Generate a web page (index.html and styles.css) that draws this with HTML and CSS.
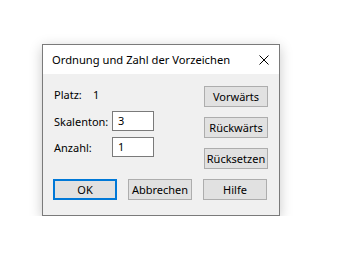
FILE: index.html
```html
<!DOCTYPE html>
<html lang="de">
<head>
<meta charset="utf-8">
<title>Ordnung und Zahl der Vorzeichen</title>
<link rel="stylesheet" href="styles.css">
</head>
<body>
<div class="dialog">
  <div class="titlebar">
    <span class="title">Ordnung und Zahl der Vorzeichen</span>
    <svg class="close" width="10" height="10" viewBox="0 0 10 10"><path d="M0.5 0.5L9.5 9.5M9.5 0.5L0.5 9.5" stroke="#000" stroke-width="1" fill="none"/></svg>
  </div>
  <div class="body">
    <div class="content">
      <div class="fields">
        <div class="row platz"><span class="label">Platz:</span><span class="value">1</span></div>
        <div class="row"><span class="label">Skalenton:</span><span class="input">3</span></div>
        <div class="row anz"><span class="label">Anzahl:</span><span class="input">1</span></div>
      </div>
      <div class="side">
        <button class="btn">Vorwärts</button>
        <button class="btn">Rückwärts</button>
        <button class="btn">Rücksetzen</button>
      </div>
    </div>
    <div class="footer">
      <button class="btn default">OK</button>
      <button class="btn">Abbrechen</button>
      <button class="btn">Hilfe</button>
    </div>
  </div>
</div>
</body>
</html>
```
FILE: styles.css
```css
html, body {
  margin: 0;
  padding: 0;
  background: #ffffff;
}
body {
  padding: 44px 0 0 42px;
  font-family: "Noto Sans", "DejaVu Sans", sans-serif;
  font-size: 11px;
  color: #000;
}
.dialog {
  width: 236px;
  height: 170px;
  border: 1px solid #7a7a7a;
  background: #f0f0f0;
  box-shadow: 0 3px 12px rgba(0,0,0,0.22);
  display: flex;
  flex-direction: column;
}
.titlebar {
  height: 29px;
  background: #ffffff;
  display: flex;
  align-items: center;
  justify-content: space-between;
  padding: 0 10px 0 9px;
}
.title {
  font-size: 11.2px;
}
.close {
  display: block;
}
.body {
  padding: 12px 11px 0 10px;
}
.content {
  display: flex;
  justify-content: space-between;
}
.fields {
  display: flex;
  flex-direction: column;
}
.row {
  display: flex;
  align-items: center;
  height: 20px;
  margin-top: 6px;
}
.row.platz {
  margin-top: -2px;
  margin-bottom: 1px;
}
.label {
  width: 59px;
  padding-left: 1px;
  box-sizing: border-box;
}
.platz .label {
  width: 40px;
}
.input {
  width: 42px;
  height: 20px;
  box-sizing: border-box;
  border: 1px solid #7a7a7a;
  background: #fff;
  padding-left: 5px;
  line-height: 18px;
}
.side {
  display: flex;
  flex-direction: column;
  gap: 10px;
}
.btn {
  width: 64px;
  height: 21px;
  box-sizing: border-box;
  border: 1px solid #adadad;
  background: #e1e1e1;
  font-family: inherit;
  font-size: 11px;
  color: #000;
  padding: 0 0 1px 0;
  margin: 0;
  line-height: 17px;
}
.btn.default {
  border: 2px solid #0078d7;
}
.footer {
  display: flex;
  gap: 11px;
  margin-top: 10px;
}
```
